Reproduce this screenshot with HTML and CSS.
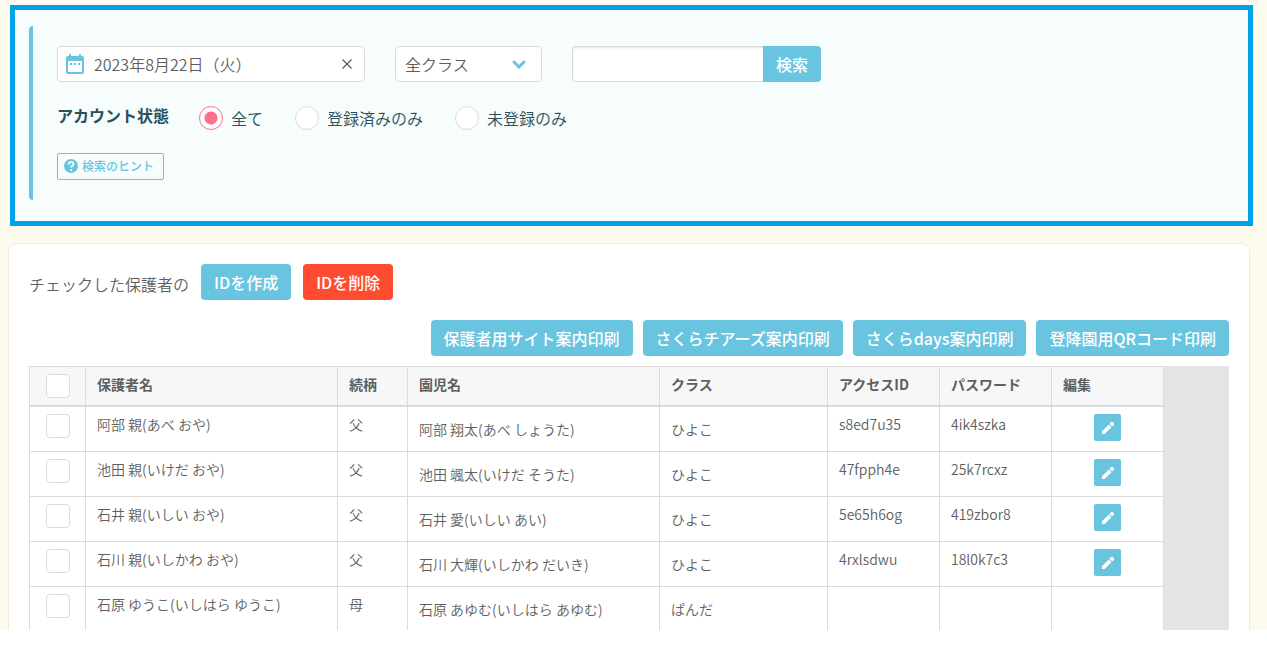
FILE: index.html
```
<!DOCTYPE html>
<html lang="ja">
<head>
<meta charset="utf-8">
<meta name="viewport" content="width=device-width, initial-scale=1">
<title>保護者アカウント管理</title>
<link rel="stylesheet" href="styles.css">
</head>
<body>
<svg class="sprite" aria-hidden="true">
  <symbol id="pencil" viewBox="0 0 24 24"><path d="M3 17v4h4L17.300 10.700l-4-4L3 17zM21 7a1.500 1.500 0 0 0 0-1.800l-2.200-2.200a1.500 1.500 0 0 0-1.800 0l-2.800 2.800 4 4L21 7z"/></symbol>
</svg>
<main class="page">
  <form class="filter">
    <div class="filter-body">
      <div class="filter-row">
        <div class="date-field">
          <svg class="date-icon" viewBox="0 0 18 20" aria-hidden="true"><path fill-rule="evenodd" d="M3 0h2v2h8V0h2v2h1a2 2 0 0 1 2 2v14a2 2 0 0 1-2 2H2a2 2 0 0 1-2-2V4a2 2 0 0 1 2-2h1zM2 7v11h14V7zM4 9h2v2H4zM8 9h2v2H8zM12 9h2v2h-2z"/></svg>
          <input class="date-input" type="text" aria-label="日付" value="2023年8月22日（火）">
          <button class="date-clear" type="button" aria-label="日付をクリア"><svg viewBox="0 0 10 10"><path d="M0.500 0.500l9 9M9.500 0.500l-9 9"/></svg></button>
        </div>
        <div class="select-field">
          <select class="select" aria-label="クラス"><option>全クラス</option></select>
          <svg class="chevron" viewBox="0 0 14 9" aria-hidden="true"><path d="M2 2l5 5 5-5"/></svg>
        </div>
        <div class="search">
          <input class="search-input" type="text" aria-label="検索キーワード">
          <button class="btn search-btn" type="submit">検索</button>
        </div>
      </div>
      <div class="status" role="radiogroup" aria-labelledby="status-title">
        <span class="status-title" id="status-title">アカウント状態</span>
        <label class="choice"><input class="radio" type="radio" name="status" checked>全て</label>
        <label class="choice"><input class="radio" type="radio" name="status">登録済みのみ</label>
        <label class="choice"><input class="radio" type="radio" name="status">未登録のみ</label>
      </div>
      <button class="hint" type="button"><svg class="hint-icon" viewBox="0 0 14 14" aria-hidden="true"><circle cx="7" cy="7" r="7"/><path d="M4.700 5.400C4.700 2.200 9.500 2.300 9.500 5.100c0 1.600-2.400 1.700-2.400 3.500M7.100 9.900v2"/></svg>検索のヒント</button>
    </div>
  </form>

  <section class="card">
    <div class="actions">
      <span class="actions-label">チェックした保護者の</span>
      <button class="btn" type="button">IDを作成</button>
      <button class="btn btn-danger" type="button">IDを削除</button>
    </div>
    <div class="prints">
      <button class="btn" type="button">保護者用サイト案内印刷</button>
      <button class="btn" type="button">さくらチアーズ案内印刷</button>
      <button class="btn" type="button">さくらdays案内印刷</button>
      <button class="btn" type="button">登降園用QRコード印刷</button>
    </div>
    <div class="table-wrap">
      <table class="table">
        <colgroup><col class="c-check"><col class="c-name"><col class="c-rel"><col class="c-name"><col class="c-class"><col class="c-id"><col class="c-id"><col class="c-id"></colgroup>
        <thead>
          <tr><th class="check"><input class="checkbox" type="checkbox" aria-label="すべて選択"></th><th>保護者名</th><th>続柄</th><th>園児名</th><th>クラス</th><th>アクセスID</th><th>パスワード</th><th>編集</th></tr>
        </thead>
        <tbody>
          <tr><td class="check"><input class="checkbox" type="checkbox" aria-label="阿部 親を選択"></td><td>阿部 親(あべ おや)</td><td>父</td><td class="child">阿部 翔太(あべ しょうた)</td><td class="child">ひよこ</td><td>s8ed7u35</td><td>4ik4szka</td><td class="edit"><button class="edit-btn" type="button" aria-label="編集"><svg><use href="#pencil"/></svg></button></td></tr>
          <tr><td class="check"><input class="checkbox" type="checkbox" aria-label="池田 親を選択"></td><td>池田 親(いけだ おや)</td><td>父</td><td class="child">池田 颯太(いけだ そうた)</td><td class="child">ひよこ</td><td>47fpph4e</td><td>25k7rcxz</td><td class="edit"><button class="edit-btn" type="button" aria-label="編集"><svg><use href="#pencil"/></svg></button></td></tr>
          <tr><td class="check"><input class="checkbox" type="checkbox" aria-label="石井 親を選択"></td><td>石井 親(いしい おや)</td><td>父</td><td class="child">石井 愛(いしい あい)</td><td class="child">ひよこ</td><td>5e65h6og</td><td>419zbor8</td><td class="edit"><button class="edit-btn" type="button" aria-label="編集"><svg><use href="#pencil"/></svg></button></td></tr>
          <tr><td class="check"><input class="checkbox" type="checkbox" aria-label="石川 親を選択"></td><td>石川 親(いしかわ おや)</td><td>父</td><td class="child">石川 大輝(いしかわ だいき)</td><td class="child">ひよこ</td><td>4rxlsdwu</td><td>18l0k7c3</td><td class="edit"><button class="edit-btn" type="button" aria-label="編集"><svg><use href="#pencil"/></svg></button></td></tr>
          <tr><td class="check"><input class="checkbox" type="checkbox" aria-label="石原 ゆうこを選択"></td><td>石原 ゆうこ(いしはら ゆうこ)</td><td>母</td><td class="child">石原 あゆむ(いしはら あゆむ)</td><td class="child">ぱんだ</td><td></td><td></td><td></td></tr>
        </tbody>
      </table>
    </div>
  </section>
</main>
</body>
</html>
```
FILE: styles.css
```
* { box-sizing: border-box; }

body {
  margin: 0;
  height: 100vh;
  padding-bottom: 18px;
  overflow: hidden;
  background: #fff;
  color: #5f5f5f;
  font: 350 16px/24px "Noto Sans CJK JP", "Noto Sans", sans-serif;
}

button, input, select { font: inherit; color: inherit; margin: 0; }
button { cursor: pointer; }

.sprite { display: none; }

.page {
  height: 100%;
  overflow: hidden;
  padding: 5px 14px 0 8px;
  background: #fffaee;
}

/* Filter panel */
.filter {
  margin-left: 2px;
  padding: 16px 14px 21px;
  border: 5px solid #00a2e8;
  background: #f7fdfd;
  color: #27505c;
}
.filter-body {
  padding: 20px 0 20px 24px;
  border-left: 4px solid #69c5df;
  border-radius: 4px 0 0 4px;
}
.filter-row { display: flex; gap: 30px; color: #5f5f5f; }

.date-field, .select, .search-input {
  height: 36px;
  border: 1px solid #dbdbdb;
  border-radius: 4px;
  background: #fff;
}
.date-field { display: flex; align-items: center; width: 308px; padding: 0 8px; }
.date-icon { flex: none; width: 18px; height: 20px; fill: #69c5df; }
.date-input { flex: 1; min-width: 0; margin-left: 10px; padding: 0; border: 0; outline: 0; background: none; }
.date-clear { display: flex; padding: 4px; border: 0; background: none; }
.date-clear svg { width: 10px; height: 10px; fill: none; stroke: #5f5f5f; stroke-width: 1.300; }

.select-field { display: grid; align-items: center; width: 147px; }
.select-field > * { grid-area: 1 / 1; }
.select { width: 100%; padding: 0 36px 0 9px; appearance: none; }
.chevron { justify-self: end; width: 14px; height: 9px; margin-right: 16px; fill: none; stroke: #69c5df; stroke-width: 3; stroke-linecap: round; pointer-events: none; }

.search { display: flex; }
.search-input { width: 191px; padding: 0 8px; border-right: 0; border-radius: 4px 0 0 4px; box-shadow: inset 0 1px 2px rgba(0, 0, 0, .1); }

.btn {
  height: 36px;
  padding: 0 13px;
  border: 0;
  border-radius: 4px;
  background: #69c5df;
  color: #fff;
  font-weight: 500;
  white-space: nowrap;
}
.btn-danger { background: #ff4b2f; }
.search-btn { border-radius: 0 4px 4px 0; }

.status { display: flex; gap: 32px; margin: 24px 0 23px; }
.status-title { margin-right: -2px; line-height: 18px; font-weight: 700; }
.choice { display: flex; align-items: center; gap: 8px; line-height: 22px; }
.radio {
  flex: none;
  width: 24px;
  height: 24px;
  border: 1px solid #dbdbdb;
  border-radius: 50%;
  background: #fff;
  appearance: none;
}
.radio:checked { border-color: #ff6f89; background: radial-gradient(circle, #ff6f89 0 6px, #fff 7px); }

.hint {
  display: flex;
  align-items: center;
  gap: 4px;
  height: 27px;
  padding: 0 9px 1px 6px;
  border: 1px solid #69c5df;
  border-radius: 2px;
  background: none;
  color: #69c5df;
  font-size: 12px;
  font-weight: 500;
}
.hint-icon { width: 14px; height: 14px; fill: #69c5df; }
.hint-icon path { fill: none; stroke: #fff; stroke-width: 1.700; }

/* List card */
.card {
  margin: 17px 3px 0 0;
  padding: 20px;
  border: 1px solid #f2ebda;
  border-radius: 8px;
  background: #fff;
}
.actions { display: flex; align-items: flex-start; gap: 12px; }
.actions-label { line-height: 40px; height: 36px; }
.prints { display: flex; justify-content: flex-end; gap: 10px; margin: 20px 0 10px; }

.table-wrap { background: #e4e4e4; }
.table {
  width: 1135px;
  table-layout: fixed;
  border-collapse: separate;
  border-spacing: 0;
  border: solid #dbdbdb;
  border-width: 1px 0 0 1px;
  background: #fff;
  font-size: 14px;
  line-height: 21px;
}
.c-check { width: 56px; }
.c-name { width: 252px; }
.c-rel { width: 70px; }
.c-class { width: 168px; }
.c-id { width: 112px; }
.table th, .table td {
  padding: 7px 11px 0;
  border: solid #dbdbdb;
  border-width: 0 1px 1px 0;
  text-align: left;
  vertical-align: top;
}
.table th { height: 40px; border-bottom-width: 2px; background: #f7f7f7; font-weight: 700; }
.table td { height: 45px; }
.table td.child { padding-top: 12px; }
.table .check { padding: 7px 0 0; text-align: center; }
.table td.edit { text-align: center; }
.checkbox {
  display: block;
  width: 24px;
  height: 24px;
  margin: 0 auto;
  border: 1px solid #dbdbdb;
  border-radius: 4px;
  background: #fff;
  appearance: none;
}
.checkbox:checked { background: #69c5df; }
.edit-btn {
  display: flex;
  align-items: center;
  justify-content: center;
  width: 27px;
  height: 27px;
  margin: 0 auto;
  padding: 0;
  border: 0;
  border-radius: 2px;
  background: #69c5df;
}
.edit-btn svg { width: 16px; height: 16px; fill: #fff; }
```
